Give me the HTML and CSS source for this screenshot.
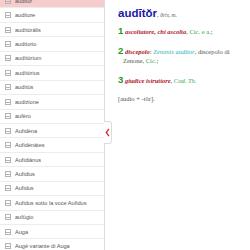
FILE: index.html
```html
<!DOCTYPE html>
<html lang="it">
<head>
    <meta charset="UTF-8">
    <title>auditōr</title>
    <link rel="stylesheet" href="styles.css">
</head>
<body>
    <div class="app">
        <!-- Elenco dei lemmi -->
        <div class="sidebar">
            <ul class="lemmi">
                <li class="lemma selected"><span class="ico"></span>auditor</li>
                <li class="lemma"><span class="ico"></span>auditore</li>
                <li class="lemma"><span class="ico"></span>audītōrālis</li>
                <li class="lemma"><span class="ico"></span>auditorio</li>
                <li class="lemma"><span class="ico"></span>audītōrium</li>
                <li class="lemma"><span class="ico"></span>audītōrius</li>
                <li class="lemma"><span class="ico"></span>audītūs</li>
                <li class="lemma"><span class="ico"></span>audizione</li>
                <li class="lemma"><span class="ico"></span>aufēro</li>
                <li class="lemma"><span class="ico"></span>Aufidēna</li>
                <li class="lemma"><span class="ico"></span>Aufidēnātes</li>
                <li class="lemma"><span class="ico"></span>Aufidiānus</li>
                <li class="lemma"><span class="ico"></span>Aufidius</li>
                <li class="lemma"><span class="ico"></span>Aufidus</li>
                <li class="lemma"><span class="ico"></span>Aufidus sotto la voce Aufidus</li>
                <li class="lemma"><span class="ico"></span>aufūgio</li>
                <li class="lemma"><span class="ico"></span>Auga</li>
                <li class="lemma"><span class="ico"></span>Augē variante di Auga</li>
            </ul>
            <div class="toggle">
                <svg width="5" height="9" viewBox="0 0 5 9"><path d="M4 0.8 L1.2 4.5 L4 8.2" fill="none" stroke="#e0262b" stroke-width="1.3"/></svg>
            </div>
        </div>

        <!-- Voce del dizionario -->
        <div class="voce">
            <div class="head"><span class="lemma-titolo">audītŏr</span>, <i class="gram">ōris, m.</i></div>
            <p class="senso"><b class="num">1</b> <i class="trad">ascoltatore, chi ascolta</i>, <span class="fonte">Cic. e a.</span>;</p>
            <p class="senso"><b class="num">2</b> <i class="trad">discepolo</i>: <i class="esempio">Zenonis auditor</i>, discepolo di Zenone, <span class="fonte">Cic.</span>;</p>
            <p class="senso"><b class="num">3</b> <i class="trad">giudice istruttore</i>, <i class="fonte">Cod. Th.</i></p>
            <p class="etimo">[audio + -tŏr].</p>
        </div>
    </div>
</body>
</html>
```

FILE: styles.css
```css
body {
    margin: 0;
    background: #ffffff;
    font-family: 'Liberation Sans', Arial, sans-serif;
}
.app {
    display: flex;
    height: 250px;
    overflow: hidden;
}
.sidebar {
    position: relative;
    width: 104px;
    flex-shrink: 0;
    border-right: 1px solid #dcdcdc;
}
.lemmi {
    list-style: none;
    margin: -6px 0 0 0;
    padding: 0;
    height: 256px;
    overflow: hidden;
}
.lemma {
    display: flex;
    align-items: center;
    height: 13.45px;
    border-bottom: 1px solid #ececec;
    font-size: 5.6px;
    color: #555555;
    white-space: nowrap;
}
.lemma.selected {
    background: #f6cccc;
}
.ico {
    width: 4px;
    height: 4px;
    margin: 0 4px 0 5px;
    border: 1px solid #b4b4b4;
    background: linear-gradient(#b4b4b4, #b4b4b4) 0 2px / 100% 1px no-repeat;
    flex-shrink: 0;
}
.toggle {
    position: absolute;
    top: 121px;
    right: -8px;
    width: 7px;
    height: 21px;
    background: #ffffff;
    border: 1px solid #dcdcdc;
    border-left: none;
    border-radius: 0 3px 3px 0;
    display: flex;
    align-items: center;
    justify-content: center;
}
.voce {
    padding: 9px 12px 0 13px;
    font-family: 'Liberation Serif', 'Times New Roman', serif;
    font-size: 6.5px;
    line-height: 9px;
    color: #555555;
}
.head {
    margin-bottom: 6px;
}
.lemma-titolo {
    font-family: 'Liberation Sans', Arial, sans-serif;
    font-weight: bold;
    font-size: 11.5px;
    line-height: 9px;
    color: #1a1aa6;
}
.gram {
    font-size: 5.5px;
}
.senso {
    margin: 0 0 10px 0;
    padding-left: 5px;
    text-indent: -5px;
}
.num {
    font-family: 'Liberation Sans', Arial, sans-serif;
    font-size: 9.5px;
    line-height: 9px;
    color: #1d9a1d;
}
.trad {
    font-weight: bold;
    color: #b0182c;
}
.fonte {
    color: #2ea84a;
}
.esempio {
    color: #26b0b8;
}
.etimo {
    margin: -1px 0 0 0;
}
```
